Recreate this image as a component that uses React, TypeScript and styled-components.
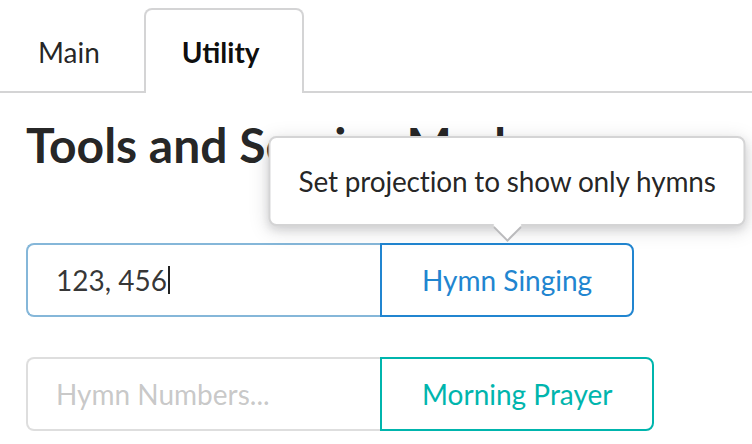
import React from 'react';
import styled, { createGlobalStyle } from 'styled-components';

const GlobalStyle = createGlobalStyle`
  html, body {
    margin: 0;
    padding: 0;
    background: #ffffff;
  }
  body {
    font-family: Lato, 'Noto Sans', 'Liberation Sans', sans-serif;
    color: rgba(0, 0, 0, 0.87);
  }
  * {
    box-sizing: border-box;
  }
`;

const TabMenu = styled.div`
  display: flex;
  align-items: flex-end;
  padding-top: 8px;
  border-bottom: 2px solid #d4d4d5;
`;

const Tab = styled.div<{ $active?: boolean }>`
  padding: 28px 42px 27px 36px;
  margin-bottom: -2px;
  font-size: 28px;
  line-height: 28px;
  font-weight: ${(p) => (p.$active ? 700 : 400)};
  color: ${(p) => (p.$active ? 'rgba(0, 0, 0, 0.95)' : 'rgba(0, 0, 0, 0.87)')};
  background: ${(p) => (p.$active ? '#ffffff' : 'transparent')};
  border: 2px solid ${(p) => (p.$active ? '#d4d4d5' : 'transparent')};
  border-bottom: none;
  border-radius: 8px 8px 0 0;
`;

const Page = styled.div`
  padding: 0 26px;
`;

const Heading = styled.h2`
  margin: 21px 0 67px;
  font-size: 48px;
  line-height: 62px;
  font-weight: 700;
  color: rgba(0, 0, 0, 0.87);
`;

const Rows = styled.div`
  display: flex;
  flex-direction: column;
  gap: 40px;
`;

const ActionInput = styled.div`
  display: flex;
  height: 74px;
`;

const Field = styled.div<{ $focused?: boolean }>`
  width: 354px;
  display: flex;
  align-items: center;
  padding: 0 28px;
  font-size: 28px;
  border: 2px solid ${(p) => (p.$focused ? '#85b7d9' : 'rgba(34, 36, 38, 0.15)')};
  border-right: none;
  border-radius: 8px 0 0 8px;
  color: rgba(0, 0, 0, 0.8);
`;

const Placeholder = styled.span`
  color: rgba(191, 191, 191, 0.87);
`;

const Caret = styled.span`
  display: inline-block;
  width: 2px;
  height: 28px;
  margin-left: 1px;
  background: #222222;
  vertical-align: middle;
`;

const ButtonWrap = styled.div`
  position: relative;
  display: flex;
`;

const BasicButton = styled.button<{ $color: string }>`
  height: 74px;
  padding: 0 40px;
  font-family: Lato, 'Noto Sans', 'Liberation Sans', sans-serif;
  font-size: 28px;
  font-weight: 400;
  color: ${(p) => p.$color};
  background: #ffffff;
  border: 2px solid ${(p) => p.$color};
  border-radius: 0 8px 8px 0;
  cursor: pointer;
`;

const Popup = styled.div`
  position: absolute;
  left: 50%;
  bottom: calc(100% + 17px);
  transform: translateX(-50%);
  padding: 23px 28px;
  white-space: nowrap;
  font-size: 28px;
  line-height: 40px;
  letter-spacing: -0.18px;
  color: rgba(0, 0, 0, 0.87);
  background: #ffffff;
  border: 2px solid #d4d4d5;
  border-radius: 8px;
  box-shadow: 0 4px 8px 0 rgba(34, 36, 38, 0.12), 0 4px 20px 0 rgba(34, 36, 38, 0.15);
  z-index: 5;

  &::after {
    content: '';
    position: absolute;
    left: 50%;
    bottom: -11px;
    width: 20px;
    height: 20px;
    margin-left: -10px;
    background: #ffffff;
    transform: rotate(45deg);
    box-shadow: 2px 2px 0 0 #bababc;
  }
`;

export default function App() {
  return (
    <>
      <GlobalStyle />
      <TabMenu>
        <Tab>Main</Tab>
        <Tab $active>Utility</Tab>
      </TabMenu>
      <Page>
        <Heading>Tools and Service Modes</Heading>
        <Rows>
          <ActionInput>
            <Field $focused>
              <span>123, 456</span>
              <Caret />
            </Field>
            <ButtonWrap>
              <BasicButton $color="#2185d0">Hymn Singing</BasicButton>
              <Popup>Set projection to show only hymns</Popup>
            </ButtonWrap>
          </ActionInput>
          <ActionInput>
            <Field>
              <Placeholder>Hymn Numbers...</Placeholder>
            </Field>
            <ButtonWrap>
              <BasicButton $color="#00b5ad">Morning Prayer</BasicButton>
            </ButtonWrap>
          </ActionInput>
        </Rows>
      </Page>
    </>
  );
}
